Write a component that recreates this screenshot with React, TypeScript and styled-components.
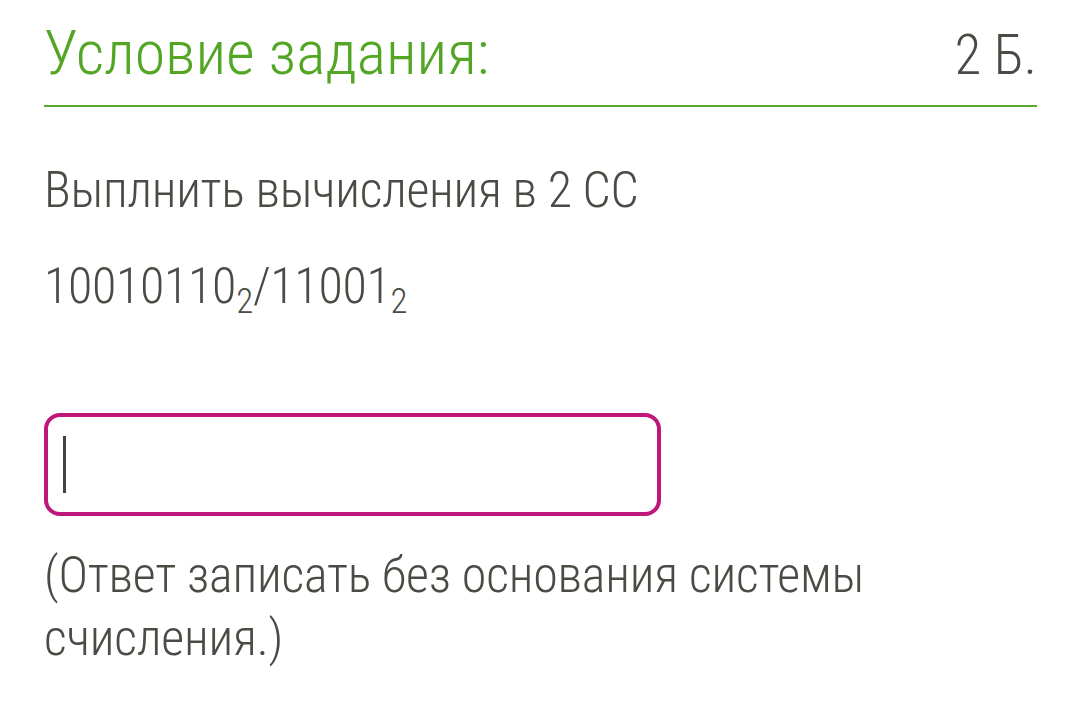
import React from "react"
import styled, { createGlobalStyle } from "styled-components"

const GlobalStyle = createGlobalStyle`
    html, body {
        margin: 0;
        padding: 0;
        background: #ffffff;
    }
    body {
        font-family: "Roboto Condensed", Roboto, "Liberation Sans", sans-serif;
        font-weight: 300;
        font-stretch: condensed;
    }
`

export default function App() {
    return (
        <>
            <GlobalStyle />
            <Page>
                <Header>
                    <Title>Условие задания:</Title>
                    <Points>2 Б.</Points>
                </Header>
                <Body>
                    <Line>Выплнить вычисления в 2 СС</Line>
                    <Line>10010110<Sub>2</Sub>/11001<Sub>2</Sub></Line>
                    <AnswerBox>
                        <Caret />
                    </AnswerBox>
                    <Note>(Ответ записать без основания системы счисления.)</Note>
                </Body>
            </Page>
        </>
    )
}

const Page = styled.div`
    display: flex;
    flex-direction: column;
    padding: 0 34px 0 44px;
    color: #4b4b45;
`

const Header = styled.div`
    display: flex;
    flex-direction: row;
    justify-content: space-between;
    align-items: baseline;
    padding-top: 20px;
    height: 85px;
    border-bottom: 2px solid #5aa82f;
`

const Title = styled.div`
    font-size: 62px;
    line-height: 66px;
    color: #52a624;
`

const Points = styled.div`
    font-size: 55px;
    line-height: 66px;
    color: #4b4b45;
`

const Body = styled.div`
    display: flex;
    flex-direction: column;
    padding-top: 52px;
`

const Line = styled.div`
    font-size: 50px;
    line-height: 62px;
    letter-spacing: -0.3px;
    margin-bottom: 34px;
`

const Sub = styled.sub`
    font-size: 35px;
    line-height: 0;
    vertical-align: -10px;
`

const AnswerBox = styled.div`
    box-sizing: border-box;
    width: 617px;
    height: 103px;
    margin-top: 62px;
    border: 4px solid #c0187a;
    border-radius: 16px;
    display: flex;
    align-items: center;
    padding-left: 15px;
`

const Caret = styled.div`
    width: 3px;
    height: 57px;
    background: #44443e;
`

const Note = styled.div`
    font-size: 50px;
    line-height: 63px;
    letter-spacing: -0.2px;
    margin-top: 28px;
    max-width: 880px;
`
